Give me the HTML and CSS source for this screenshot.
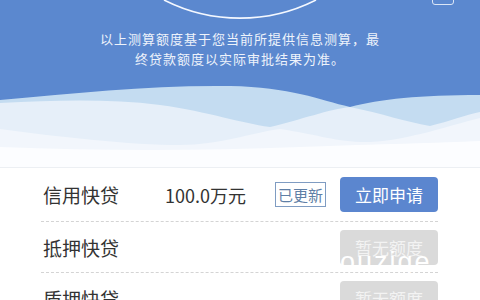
FILE: index.html
```html
<!DOCTYPE html>
<html lang="zh-CN">
<head>
    <meta charset="UTF-8">
    <title>额度测算</title>
    <link rel="stylesheet" href="styles.css">
</head>
<body>
    <!-- 顶部蓝色区域 -->
    <div class="header">
        <svg class="arc" width="480" height="20" viewBox="0 0 480 20">
            <path d="M164 0 A168 168 0 0 0 316 0" fill="none" stroke="#f4f8ff" stroke-width="1.6"/>
        </svg>
        <div class="corner"></div>
        <p class="note">以上测算额度基于您当前所提供信息测算，最<br>终贷款额度以实际审批结果为准。</p>
        <!-- 波浪 -->
        <svg class="waves" width="480" height="82" viewBox="0 0 480 82">
            <path d="M0 15 C80 8 150 0 230 1 C290 2 320 15 350 22 C380 14 420 10 480 10 L480 82 L0 82 Z" fill="#c4dcf1"/>
            <path d="M0 18 C60 15 110 14 160 20 C210 27 240 38 270 42 C300 35 330 24 350 22 C380 28 410 38 430 41 C450 36 465 30 480 27 L480 82 L0 82 Z" fill="#e6eff9"/>
            <path d="M0 44 C60 52 130 60 180 60 C220 60 250 48 280 44 C320 50 340 58 370 57 C410 55 450 40 480 33 L480 82 L0 82 Z" fill="#f2f6fc"/>
            <path d="M0 62 C100 66 200 66 300 62 C380 59 440 58 480 56 L480 82 L0 82 Z" fill="#fcfdff"/>
        </svg>
    </div>

    <!-- 产品列表 -->
    <div class="list">
        <div class="row">
            <span class="label">信用快贷</span>
            <span class="amount">100.0万元</span>
            <span class="tag">已更新</span>
            <a class="btn" href="javascript:;">立即申请</a>
        </div>
        <div class="row">
            <span class="label">抵押快贷</span>
            <span class="amount"></span>
            <a class="btn btn-off" href="javascript:;">暂无额度</a>
        </div>
        <div class="row">
            <span class="label">质押快贷</span>
            <span class="amount"></span>
            <a class="btn btn-off" href="javascript:;">暂无额度</a>
        </div>
        <span class="mark">ouzige.c</span>
    </div>
</body>
</html>
```

FILE: styles.css
```css
*{
    margin: 0;
    padding: 0;
}
body{
    width: 480px;
    height: 300px;
    overflow: hidden;
    background-color: #fff;
    font-family: "Noto Sans CJK SC", "Noto Sans", sans-serif;
}

/*顶部*/
.header{
    position: relative;
    height: 167px;
    background-color: #5b88cf;
    border-bottom: 1px solid #eceff3;
    display: flex;
    flex-direction: column;
}
.arc{
    display: block;
}
.corner{
    position: absolute;
    top: -4px;
    left: 432px;
    width: 20px;
    height: 7px;
    border: 1px solid #dbe6f6;
    border-radius: 3px;
}
.note{
    margin-top: 9px;
    color: #eef3fb;
    font-size: 13px;
    letter-spacing: 1px;
    line-height: 20px;
    text-align: center;
}
.waves{
    display: block;
    margin-top: auto;
}

/*列表*/
.list{
    position: relative;
    padding: 0 42px 0 41px;
}
.row{
    height: 50px;
    display: flex;
    align-items: center;
    border-bottom: 1px dashed #d4d4d4;
}
.row:first-child{
    height: 53px;
}
.label{
    width: 122px;
    padding-left: 2px;
    font-size: 19px;
    color: #333;
}
.amount{
    flex: 1;
    font-size: 18px;
    color: #333;
}
.tag{
    width: 49px;
    height: 23px;
    margin-right: 14px;
    border: 1px solid #7f9cc2;
    font-size: 15px;
    line-height: 23px;
    text-align: center;
    color: #5f7fa6;
}
.btn{
    width: 98px;
    height: 35px;
    border-radius: 4px;
    background-color: #5b86cf;
    color: #fff;
    font-size: 17px;
    line-height: 35px;
    text-align: center;
    text-decoration: none;
}
.btn-off{
    background-color: #dadada;
    color: #f3f3f3;
}

/*水印*/
.mark{
    position: absolute;
    left: 340px;
    top: 79px;
    font-family: "Liberation Sans", sans-serif;
    font-size: 27px;
    line-height: 31px;
    letter-spacing: 2px;
    color: #fff;
    white-space: nowrap;
}
```
